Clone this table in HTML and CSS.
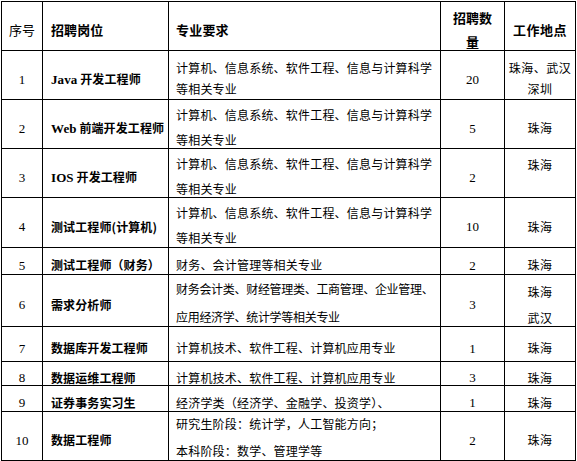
FILE: index.html
```html
<!DOCTYPE html>
<html lang="zh">
<head>
<meta charset="utf-8">
<link rel="stylesheet" href="styles.css">
</head>
<body>
<table class="jobs">
  <colgroup>
    <col class="c-no"><col class="c-pos"><col class="c-req"><col class="c-num"><col class="c-loc">
  </colgroup>
  <tr class="r-head">
    <td class="no head-no">序号</td>
    <td class="pos head">招聘岗位</td>
    <td class="req head">专业要求</td>
    <td class="num head stack head-num"><div class="lines">招聘数<br>量</div></td>
    <td class="loc head">工作地点</td>
  </tr>
  <tr class="r1">
    <td class="no"><span class="lat">1</span></td>
    <td class="pos"><span class="lat">Java</span> 开发工程师</td>
    <td class="req stack r1-stack"><div class="lines">计算机、信息系统、软件工程、信息与计算科学<br>等相关专业</div></td>
    <td class="num"><span class="lat">20</span></td>
    <td class="loc stack r1-stack"><div class="lines">珠海、武汉<br>深圳</div></td>
  </tr>
  <tr class="r2">
    <td class="no"><span class="lat">2</span></td>
    <td class="pos"><span class="lat">Web</span> 前端开发工程师</td>
    <td class="req stack mid-stack"><div class="lines">计算机、信息系统、软件工程、信息与计算科学<br>等相关专业</div></td>
    <td class="num"><span class="lat">5</span></td>
    <td class="loc">珠海</td>
  </tr>
  <tr class="r3">
    <td class="no"><span class="lat">3</span></td>
    <td class="pos"><span class="lat">IOS</span> 开发工程师</td>
    <td class="req stack mid-stack"><div class="lines">计算机、信息系统、软件工程、信息与计算科学<br>等相关专业</div></td>
    <td class="num"><span class="lat">2</span></td>
    <td class="loc stack loc-top">珠海</td>
  </tr>
  <tr class="r4">
    <td class="no"><span class="lat">4</span></td>
    <td class="pos">测试工程师(计算机)</td>
    <td class="req stack mid-stack"><div class="lines">计算机、信息系统、软件工程、信息与计算科学<br>等相关专业</div></td>
    <td class="num"><span class="lat">10</span></td>
    <td class="loc">珠海</td>
  </tr>
  <tr class="r5">
    <td class="no"><span class="lat">5</span></td>
    <td class="pos">测试工程师（财务）</td>
    <td class="req">财务、会计管理等相关专业</td>
    <td class="num"><span class="lat">2</span></td>
    <td class="loc">珠海</td>
  </tr>
  <tr class="r6">
    <td class="no"><span class="lat">6</span></td>
    <td class="pos">需求分析师</td>
    <td class="req stack r6-req dense"><div class="lines">财务会计类、财经管理类、工商管理、企业管理、<br>应用经济学、统计学等相关专业</div></td>
    <td class="num"><span class="lat">3</span></td>
    <td class="loc stack r6-loc"><div class="lines">珠海<br>武汉</div></td>
  </tr>
  <tr class="r7">
    <td class="no"><span class="lat">7</span></td>
    <td class="pos">数据库开发工程师</td>
    <td class="req">计算机技术、软件工程、计算机应用专业</td>
    <td class="num"><span class="lat">1</span></td>
    <td class="loc">珠海</td>
  </tr>
  <tr class="r8">
    <td class="no"><span class="lat">8</span></td>
    <td class="pos">数据运维工程师</td>
    <td class="req">计算机技术、软件工程、计算机应用专业</td>
    <td class="num"><span class="lat">3</span></td>
    <td class="loc">珠海</td>
  </tr>
  <tr class="r9">
    <td class="no"><span class="lat">9</span></td>
    <td class="pos">证券事务实习生</td>
    <td class="req">经济学类（经济学、金融学、投资学）、</td>
    <td class="num"><span class="lat">1</span></td>
    <td class="loc">珠海</td>
  </tr>
  <tr class="r10">
    <td class="no"><span class="lat">10</span></td>
    <td class="pos">数据工程师</td>
    <td class="req stack r10-req"><div class="lines">研究生阶段：统计学，人工智能方向；<br>本科阶段：数学、管理学等</div></td>
    <td class="num"><span class="lat">2</span></td>
    <td class="loc">珠海</td>
  </tr>
</table>
</body>
</html>
```

FILE: styles.css
```css
html, body {
  margin: 0;
  padding: 0;
  background: #fff;
}

body {
  font-family: "Noto Sans CJK SC", "Noto Sans", sans-serif;
  font-size: 12px;
  color: #000;
}

.jobs {
  margin: 1px 0 0 1px;
  border-collapse: collapse;
  table-layout: fixed;
  width: 574px;
}

.c-no { width: 41px; }
.c-pos { width: 126px; }
.c-req { width: 272px; }
.c-num { width: 64px; }
.c-loc { width: 71px; }

.jobs td {
  border: 1px solid #000;
  padding: 8px 0 0 0;
  line-height: 14px;
  vertical-align: middle;
  white-space: nowrap;
}

/* multi-line cells: top aligned with own spacing */
.jobs td.stack {
  vertical-align: top;
}

.lines {
  margin-bottom: -12px;
}

.r-head { height: 49px; }
.r1 { height: 49px; }
.r2 { height: 49px; }
.r3 { height: 49px; }
.r4 { height: 50px; }
.r5 { height: 27px; }
.r6 { height: 52px; }
.r7 { height: 35px; }
.r8 { height: 23px; }
.r9 { height: 26px; }
.r10 { height: 49px; }

.no { text-align: center; }
.num { text-align: center; }
.loc { text-align: center; letter-spacing: 0.5px; }

.jobs td.pos {
  padding-left: 8px;
  font-weight: bold;
  letter-spacing: 0.1px;
}

.jobs td.req {
  padding-left: 7px;
  letter-spacing: 0.2px;
}

.jobs td.dense { letter-spacing: -0.3px; }

.head {
  font-weight: bold;
  font-size: 13px;
}

.head-no {
  font-size: 13px;
}

.jobs td.head-num { padding-top: 4px; }
.head-num .lines { line-height: 24px; }

.jobs td.r1-stack { padding-top: 6px; }
.r1-stack .lines { line-height: 21px; }

.jobs td.mid-stack { padding-top: 2px; }
.mid-stack .lines { line-height: 25px; }

.jobs td.loc-top { padding-top: 9px; }

.jobs td.r6-req { padding-top: 0; }
.r6-req .lines { line-height: 28px; }

.jobs td.r6-loc { padding-top: 4px; }
.r6-loc .lines { line-height: 26px; }

.jobs td.r10-req { padding-top: 0; }
.r10-req .lines { line-height: 27px; margin-top: -2px; }

.lat {
  font-family: "Liberation Serif", "Times New Roman", serif;
  font-size: 13px;
}

.pos .lat { font-weight: bold; }
```
